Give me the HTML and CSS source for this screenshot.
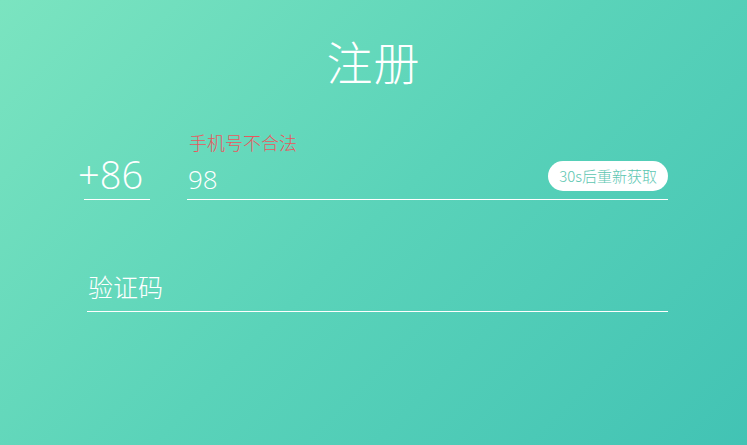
FILE: index.html
```html
<!DOCTYPE html>
<html lang="zh">
<head>
<meta charset="utf-8">
<title>注册</title>
<link rel="stylesheet" href="styles.css">
</head>
<body>
<main class="page">
  <h1 class="title">注册</h1>
  <div class="phone-row">
    <div class="code-field">
      <span class="code">+86</span>
    </div>
    <div class="phone-field">
      <div class="error">手机号不合法</div>
      <div class="input-line">
        <span class="value">98</span>
        <button class="resend">30s后重新获取</button>
      </div>
    </div>
  </div>
  <div class="sms-field">
    <span class="placeholder">验证码</span>
  </div>
</main>
</body>
</html>
```
FILE: styles.css
```css
html, body {
  margin: 0;
  padding: 0;
}
body {
  font-family: "Noto Sans CJK SC", "Noto Sans", sans-serif;
  color: #fff;
}
.page {
  width: 747px;
  height: 445px;
  box-sizing: border-box;
  background: linear-gradient(135deg, #7be4c0 0%, #5ad3b9 50%, #42c3b4 100%);
  padding-top: 28px;
  overflow: hidden;
}
.title {
  margin: 0;
  text-align: center;
  font-size: 46px;
  font-weight: 300;
  line-height: 64px;
  letter-spacing: 1px;
}
.phone-row {
  display: flex;
  align-items: flex-end;
  margin-top: 38px;
  padding-left: 84px;
  gap: 37px;
  width: 584px;
}
.code-field {
  width: 66px;
  border-bottom: 1px solid #fff;
}
.code {
  display: block;
  font-family: "Open Sans", sans-serif;
  font-weight: 300;
  font-size: 38px;
  line-height: 42px;
  padding-bottom: 4px;
  margin-left: -6px;
}
.phone-field {
  flex: 1;
}
.error {
  color: #e8575e;
  font-size: 18px;
  font-weight: 300;
  line-height: 24px;
  margin-left: 2px;
}
.input-line {
  display: flex;
  align-items: flex-end;
  justify-content: space-between;
  height: 45px;
  border-bottom: 1px solid #fff;
}
.value {
  font-family: "Open Sans", sans-serif;
  font-weight: 300;
  font-size: 26px;
  line-height: 30px;
  margin-left: 1px;
  padding-bottom: 5px;
}
.resend {
  background: #fff;
  border: none;
  border-radius: 15px;
  height: 30px;
  padding: 0 11px;
  color: #5cc6b1;
  font-family: "Noto Sans CJK SC", sans-serif;
  font-weight: 300;
  font-size: 15px;
  line-height: 30px;
  margin-bottom: 8px;
  cursor: pointer;
}
.sms-field {
  margin: 70px 0 0 87px;
  width: 581px;
  border-bottom: 1px solid #fff;
  padding-bottom: 9px;
}
.placeholder {
  display: block;
  font-size: 25px;
  font-weight: 300;
  line-height: 32px;
  margin-left: 1px;
}
```
